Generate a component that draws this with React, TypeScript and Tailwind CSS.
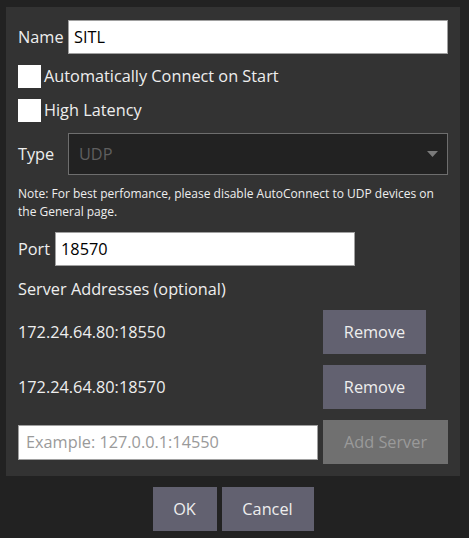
import React from "react";

const font = { fontFamily: '"Open Sans", "Noto Sans", sans-serif' };

function Check({ label }: { label: string }) {
  return (
    <div className="flex items-center h-[23px]">
      <div className="w-[23px] h-[23px] bg-white" />
      <span className="ml-[3px] text-[16.3px] text-[#eeeeee]">{label}</span>
    </div>
  );
}

function Btn({ label, w, muted }: { label: string; w: string; muted?: boolean }) {
  return (
    <button
      className={`${w} h-[44px] flex items-center justify-center text-[16.3px] ${
        muted ? "bg-[#707070] text-[#9a9a9a]" : "bg-[#626170] text-[#eeeeee]"
      }`}
    >
      {label}
    </button>
  );
}

export default function App() {
  const servers = ["172.24.64.80:18550", "172.24.64.80:18570"];

  return (
    <div className="w-[469px] h-[538px] bg-[#222222] pt-[7px] pl-[6px]" style={font}>
      <div className="w-[454px] bg-[#333333] px-[12px] pt-[13px] pb-[12px] flex flex-col">
        {/* Name */}
        <div className="flex items-center">
          <span className="w-[44px] text-[16.3px] text-[#eeeeee] whitespace-nowrap">Name</span>
          <input
            readOnly
            value="SITL"
            className="ml-[6px] flex-1 h-[34px] bg-white border border-[#a0a0a0] px-[5px] text-[16.3px] text-black outline-none"
          />
        </div>

        <div className="mt-[11px] flex flex-col gap-[11px]">
          <Check label="Automatically Connect on Start" />
          <Check label="High Latency" />
        </div>

        {/* Type */}
        <div className="mt-[11px] flex items-center">
          <span className="w-[44px] text-[16.3px] text-[#eeeeee]">Type</span>
          <div className="ml-[6px] flex-1 h-[42px] bg-[#222222] border border-[#6e6e6e] flex items-center justify-between pl-[10px] pr-[9px]">
            <span className="text-[16.3px] text-[#5f5f5f]">UDP</span>
            <svg width="11" height="6" viewBox="0 0 11 6">
              <path d="M0 0 L11 0 L5.5 6 Z" fill="#7a7a7a" />
            </svg>
          </div>
        </div>

        <p className="mt-[10px] text-[12px] leading-[18px] text-[#eeeeee]">
          Note: For best perfomance, please disable AutoConnect to UDP devices on the General page.
        </p>

        {/* Port */}
        <div className="mt-[11px] flex items-center">
          <span className="text-[16.3px] text-[#eeeeee]">Port</span>
          <input
            readOnly
            value="18570"
            className="ml-[5px] w-[300px] h-[34px] bg-white border border-[#a0a0a0] px-[5px] text-[16.3px] text-black outline-none"
          />
        </div>

        <div className="mt-[12px] text-[16.3px] leading-[22px] text-[#eeeeee]">Server Addresses (optional)</div>

        <div className="mt-[10px] flex flex-col gap-[11px]">
          {servers.map((s) => (
            <div key={s} className="flex items-center gap-[5px]">
              <span className="w-[300px] text-[16.3px] text-[#eeeeee]">{s}</span>
              <Btn label="Remove" w="w-[103px]" />
            </div>
          ))}
          <div className="flex items-center gap-[5px]">
            <input
              readOnly
              placeholder="Example: 127.0.0.1:14550"
              className="w-[300px] h-[35px] bg-white border border-[#a0a0a0] px-[7px] text-[16.3px] text-black placeholder:text-[#9a9a9a] outline-none"
            />
            <Btn label="Add Server" w="w-[125px]" muted />
          </div>
        </div>
      </div>

      <div className="mt-[11px] w-[454px] flex justify-center gap-[5px]">
        <Btn label="OK" w="w-[64px]" />
        <Btn label="Cancel" w="w-[92px]" />
      </div>
    </div>
  );
}
